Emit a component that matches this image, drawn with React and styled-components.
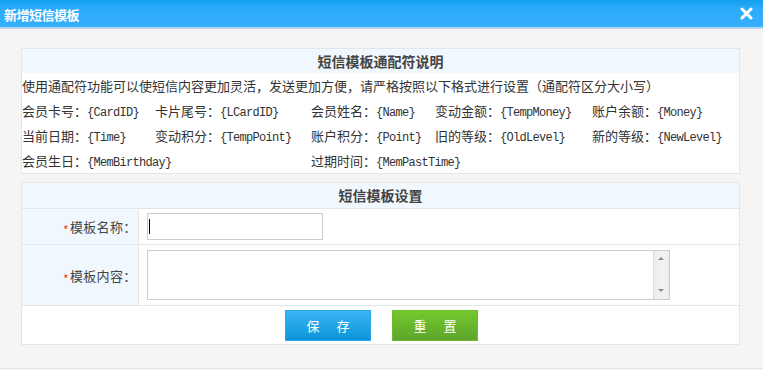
import React from 'react'
import styled, { createGlobalStyle } from 'styled-components'

const GlobalStyle = createGlobalStyle`
  html, body {
    margin: 0;
    padding: 0;
    background: #f5f5f5;
    font-family: "Noto Sans CJK SC", "Liberation Sans", sans-serif;
    font-size: 13px;
    color: #333;
  }
`

const Dialog = styled.div`
  width: 763px;
  height: 369px;
  background: #f5f5f5;
  border-bottom: 1px solid #e6e6e6;
  box-sizing: border-box;
`

const TitleBar = styled.div`
  height: 27px;
  display: flex;
  align-items: center;
  justify-content: space-between;
  padding: 0 10px 0 4px;
  background: linear-gradient(to bottom, #14a0ef 0%, #2eacfb 35%, #34affc 100%);
  border-bottom: 2px solid #b4d6ee;
`

const Title = styled.div`
  color: #fff;
  font-size: 13px;
  font-weight: bold;
  letter-spacing: -0.5px;
  padding-top: 1px;
`

const Close = styled.svg`
  width: 13px;
  height: 13px;
  display: block;
`

const Content = styled.div`
  padding: 19px 23px 0 21px;
  display: flex;
  flex-direction: column;
  gap: 8px;
`

const Panel = styled.div`
  border: 1px solid #e2e6ea;
  background: #fff;
`

const PanelHead = styled.div`
  height: ${(p) => p.$h}px;
  line-height: ${(p) => p.$h}px;
  text-align: center;
  background: #f0f7fd;
  font-size: 14px;
  font-weight: bold;
  color: #444;
`

const Intro = styled.div`
  height: 25px;
  line-height: 25px;
  white-space: nowrap;
`

const Vars = styled.div`
  display: grid;
  grid-template-columns: 133px 156px 124px 157px 1fr;
  grid-auto-rows: 25px;
  align-items: center;
  white-space: nowrap;
`

const VarItem = styled.div`
  grid-column: ${(p) => p.$col || 'auto'};
`

const Code = styled.span`
  font-family: "Liberation Mono", monospace;
  font-size: 12px;
  letter-spacing: -0.7px;
  color: #333;
`

const Table = styled.table`
  width: 100%;
  border-collapse: collapse;
  td {
    border-top: 1px solid #e2e6ea;
  }
`

const Label = styled.td`
  width: 116px;
  height: ${(p) => p.$h}px;
  background: #f0f7fd;
  border-right: 1px solid #e2e6ea;
  text-align: right;
  padding: 0 1px 0 0;
  color: #444;
  box-sizing: border-box;
  letter-spacing: 0.3px;
`

const Star = styled.span`
  color: #f43f0a;
  font-size: 12px;
  position: relative;
  top: 3px;
  margin-right: 1px;
`

const Field = styled.td`
  padding: 0 0 0 8px;
`

const InputWrap = styled.div`
  position: relative;
  width: ${(p) => p.$w}px;
`

const TextInput = styled.input`
  width: 176px;
  height: 27px;
  box-sizing: border-box;
  border: 1px solid #ccc;
  outline: none;
  padding: 0 2px;
  font-size: 13px;
  display: block;
`

const Caret = styled.span`
  position: absolute;
  left: 2px;
  top: 6px;
  width: 1px;
  height: 15px;
  background: #000;
`

const TextArea = styled.textarea`
  width: 523px;
  height: 50px;
  box-sizing: border-box;
  border: 1px solid #ccc;
  outline: none;
  resize: none;
  padding: 2px 20px 2px 2px;
  display: block;
`

const ScrollBar = styled.div`
  position: absolute;
  top: 1px;
  right: 1px;
  bottom: 1px;
  width: 16px;
  background: linear-gradient(to right, #ececec, #f3f3f3 60%, #ececec);
  border-left: 1px solid #dedede;
  display: flex;
  flex-direction: column;
  justify-content: space-between;
  align-items: center;
  padding: 6px 0 7px;
  box-sizing: border-box;
`

const Arrow = styled.span`
  width: 0;
  height: 0;
  border-left: 3px solid transparent;
  border-right: 3px solid transparent;
  ${(p) => (p.$down ? 'border-top: 3px solid #8c8c8c;' : 'border-bottom: 3px solid #8c8c8c;')}
`

const Actions = styled.td`
  height: 38px;
  text-align: center;
  padding: 0;
`

const Buttons = styled.div`
  display: flex;
  justify-content: center;
  gap: 21px;
  margin-left: 2px;
`

const Button = styled.button`
  width: 86px;
  height: 31px;
  border: 1px solid ${(p) => (p.$green ? '#6cbc2e' : '#2aa6ea')};
  color: #fff;
  font-size: 13px;
  font-family: "Noto Sans CJK SC", sans-serif;
  letter-spacing: 2px;
  padding: 0 0 0 2px;
  white-space: pre;
  background: ${(p) =>
    p.$green
      ? 'linear-gradient(to bottom, #74c82c, #5da52d)'
      : 'linear-gradient(to bottom, #3bb5f6, #0c94d7)'};
  cursor: pointer;
`

const rows = [
  [
    ['会员卡号：', '{CardID}'],
    ['卡片尾号：', '{LCardID}'],
    ['会员姓名：', '{Name}'],
    ['变动金额：', '{TempMoney}'],
    ['账户余额：', '{Money}'],
  ],
  [
    ['当前日期：', '{Time}'],
    ['变动积分：', '{TempPoint}'],
    ['账户积分：', '{Point}'],
    ['旧的等级：', '{OldLevel}'],
    ['新的等级：', '{NewLevel}'],
  ],
  [
    ['会员生日：', '{MemBirthday}'],
    ['过期时间：', '{MemPastTime}', 3],
  ],
]

export default function App() {
  return (
    <>
      <GlobalStyle />
      <Dialog>
        <TitleBar>
          <Title>新增短信模板</Title>
          <Close viewBox="0 0 13 13">
            <path d="M2 2 L11 11 M11 2 L2 11" stroke="#fff" strokeWidth="3" strokeLinecap="round" />
          </Close>
        </TitleBar>
        <Content>
          <Panel>
            <PanelHead $h={24}>短信模板通配符说明</PanelHead>
            <Intro>使用通配符功能可以使短信内容更加灵活，发送更加方便，请严格按照以下格式进行设置（通配符区分大小写）</Intro>
            <Vars>
              {rows.map((row) =>
                row.map(([label, code, col]) => (
                  <VarItem key={code} $col={col}>
                    {label}
                    <Code>{code}</Code>
                  </VarItem>
                ))
              )}
            </Vars>
          </Panel>
          <Panel>
            <PanelHead $h={25}>短信模板设置</PanelHead>
            <Table>
              <tbody>
                <tr>
                  <Label $h={36}>
                    <Star>*</Star>模板名称：
                  </Label>
                  <Field>
                    <InputWrap $w={176}>
                      <TextInput />
                      <Caret />
                    </InputWrap>
                  </Field>
                </tr>
                <tr>
                  <Label $h={61}>
                    <Star>*</Star>模板内容：
                  </Label>
                  <Field>
                    <InputWrap $w={523}>
                      <TextArea />
                      <ScrollBar>
                        <Arrow />
                        <Arrow $down />
                      </ScrollBar>
                    </InputWrap>
                  </Field>
                </tr>
                <tr>
                  <Actions colSpan={2}>
                    <Buttons>
                      <Button>{'保\u3000存'}</Button>
                      <Button $green>{'重\u3000置'}</Button>
                    </Buttons>
                  </Actions>
                </tr>
              </tbody>
            </Table>
          </Panel>
        </Content>
      </Dialog>
    </>
  )
}
